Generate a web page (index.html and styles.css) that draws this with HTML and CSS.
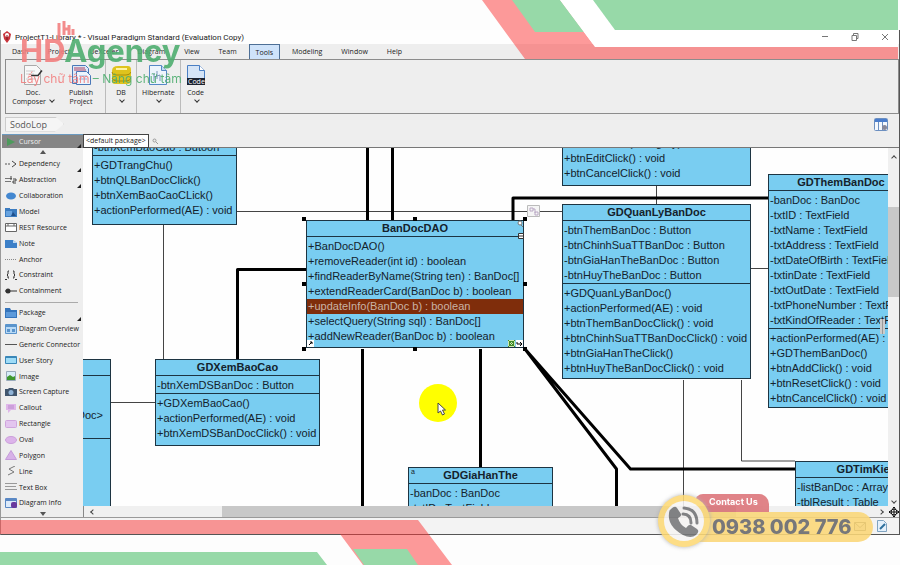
FILE: index.html
```html
<!DOCTYPE html>
<html lang="en">
  <head>
    <meta charset="utf-8" />
    <meta name="viewport" content="width=device-width, initial-scale=1.0" />
    <title>Visual Paradigm Standard</title>
    <link rel="stylesheet" href="styles.css">
  </head>
  <body>
    <div class="window">
      <header class="titlebar">
        <svg class="app-icon" viewBox="0 0 10 12"><path d="M5 0 9 3 8 8 5 12 2 8 1 3z" fill="#c8343c"/><circle cx="5" cy="4" r="2" fill="#fff"/><path d="M5 4v5" stroke="#7d1118"/></svg>
        <h1 class="title">ProjectT1-Library * - Visual Paradigm Standard (Evaluation Copy)</h1>
        <div class="window-buttons">
          <button aria-label="Minimize"><svg viewBox="0 0 8 8"><path d="M1 3.500h6"/></svg></button>
          <button aria-label="Restore"><svg viewBox="0 0 8 8"><path d="M1 2.500h4.500v5H1zM2.500 2V.5H7v5H6"/></svg></button>
          <button aria-label="Close"><svg viewBox="0 0 8 8"><path d="M1 1l6 6M7 1 1 7"/></svg></button>
        </div>
      </header>

      <nav class="menu">
        <button>Dash</button>
        <button>Project</button>
        <button>UeXceler</button>
        <button>Diagram</button>
        <button>View</button>
        <button>Team</button>
        <button class="active">Tools</button>
        <button>Modeling</button>
        <button>Window</button>
        <button>Help</button>
      </nav>

      <div class="toolbar">
        <div class="tool-group">
          <button class="tool wide">
            <svg viewBox="0 0 20 20"><path d="M1.500.5h12l4 4v15h-16z" fill="#f8f8f8" stroke="#aaa"/><path d="M3 6h9M3 9h8M3 14h10" stroke="#ccc"/><path d="M8 10.500h7l4-5" fill="none" stroke="#333" stroke-width="1.500"/></svg>
            <span>Doc.</span><span>Composer <i class="chevron"></i></span>
          </button>
          <button class="tool wide">
            <svg viewBox="0 0 20 20"><path d="M1.500.5h13l3 3v15h-16z" fill="#dce9f8" stroke="#4a78b8"/><path d="M3 3h11M3 5h12" stroke="#b04060"/><path d="M5.500 6.500h10l4 4v9h-14z" fill="#eef5fd" stroke="#4a78b8"/><path d="M8 11h8M8 14h8" stroke="#8fb2dc"/></svg>
            <span>Publish</span><span>Project</span>
          </button>
        </div>
        <div class="tool-group">
          <button class="tool">
            <svg viewBox="0 0 20 20"><path d="M1 6q0-5 6-5h10q3 0 3 4v11q0 3-4 3H4q-3 0-3-3z" fill="#dfc31d"/><path d="M1 7q0 3 4 3h10q4 0 5-3M1 13q1 3 5 3h9q4 0 5-3" fill="none" stroke="#a88d0a"/><path d="M5 4h11" stroke="#fff3a0" stroke-width="2"/></svg>
            <span>DB</span><i class="chevron"></i>
          </button>
        </div>
        <div class="tool-group">
          <button class="tool">
            <svg viewBox="0 0 20 20"><path d="M1.500.5h12l5 5v14h-17z" fill="#edf4fc" stroke="#5588c6"/><path d="M13.500.5v5h5" fill="#c5daf3" stroke="#5588c6"/><path d="M6 8v8M9 6v8M6 12l6-2v6" fill="none" stroke="#7895bb"/></svg>
            <span>Hibernate</span><i class="chevron"></i>
          </button>
        </div>
        <div class="tool-group">
          <button class="tool">
            <svg viewBox="0 0 20 20"><path d="M1.500.5h12l5 5v14h-17z" fill="#d5e4f6" stroke="#4a7fc4"/><path d="M13.500.5v5h5" fill="#fff" stroke="#4a7fc4"/><path d="M1 13h18v7H1z" fill="#1b2230"/><text x="2" y="19" class="code-label">Code</text></svg>
            <span>Code</span><i class="chevron"></i>
          </button>
        </div>
      </div>

      <div class="breadcrumb">
        <a class="crumb" href="#">SodoLop</a>
        <button class="layout-button" aria-label="Layout"><svg viewBox="0 0 14 13"><rect x=".5" y=".5" width="13" height="12" rx="1" fill="#f4f8fd" stroke="#6c8fc0"/><path d="M1 1h12v3H1z" fill="#4a7dcc"/><path d="M4.500 4v8M8.500 4v8" stroke="#6c8fc0"/><circle cx="10.500" cy="9.500" r="2.500" fill="#889"/></svg></button>
      </div>

      <main class="workspace">
        <aside class="palette">
          <button class="palette-item cursor more"><svg viewBox="0 0 12 10"><path d="M2 1l8 4-8 4z" fill="#4d9a5c"/></svg>Cursor</button>
          <div class="scroll-arrow up"></div>
          <button class="palette-item more"><svg viewBox="0 0 12 10"><path d="M0 5h6" stroke="#555" stroke-dasharray="2 1"/><path d="M7 2l4 3-4 3" fill="none" stroke="#444"/></svg>Dependency</button>
          <button class="palette-item more"><svg viewBox="0 0 12 10"><path d="M0 3.500h7M0 6.500h6" stroke="#777"/><path d="M6 1v4M8 4h3v2H8v2h3" fill="none" stroke="#444"/></svg>Abstraction</button>
          <button class="palette-item"><svg viewBox="0 0 12 10"><ellipse cx="6" cy="5" rx="5" ry="3.500" fill="#4387d0"/></svg>Collaboration</button>
          <button class="palette-item"><svg viewBox="0 0 12 10"><path d="M0 1h5v1h7v8H0z" fill="#3c7cc0"/><path d="M1 4h6v5H1z" fill="#68a3df"/><path d="M8 5l3 4H6z" fill="#204f8a"/></svg>Model</button>
          <button class="palette-item"><svg viewBox="0 0 12 10"><path d="M.5 1.500h11v8H.5zM.5 4h11M3 1v3M9 1v3" fill="#fff" stroke="#666"/></svg>REST Resource</button>
          <button class="palette-item"><svg viewBox="0 0 12 10"><path d="M0 2h8l4 3v5H0z" fill="#3d80c8"/><path d="M8 2v3h4z" fill="#bcd8f2"/></svg>Note</button>
          <button class="palette-item"><svg viewBox="0 0 12 10"><path d="M0 5.500h12" stroke="#888" stroke-dasharray="1 1"/></svg>Anchor</button>
          <button class="palette-item"><svg viewBox="0 0 12 10"><path d="M4 1H3v3L2 5l1 1v2h1M8 1h1v3l1 1-1 1v2H8M0 9.500h2M10 9.500h2" fill="none" stroke="#333"/></svg>Constraint</button>
          <button class="palette-item"><svg viewBox="0 0 12 10"><circle cx="3" cy="5" r="2.500" fill="#333"/><path d="M0 5h12" stroke="#333"/></svg>Containment</button>
          <hr />
          <button class="palette-item more"><svg viewBox="0 0 12 10"><path d="M0 0h5l1 2h6v8H0z" fill="#3574bb"/><path d="M1 4h10v5H1z" fill="#5d9ada"/></svg>Package</button>
          <button class="palette-item"><svg viewBox="0 0 12 10"><path d="M.5.5h11v9H.5z" fill="#b8d9f5" stroke="#5a94cc"/><path d="M1 1h10v2H1zM2 5h3v3H2zM7 5h3v3H7z" fill="#5a94cc"/></svg>Diagram Overview</button>
          <button class="palette-item"><svg viewBox="0 0 12 10"><path d="M0 5.500h12" stroke="#555"/></svg>Generic Connector</button>
          <button class="palette-item"><svg viewBox="0 0 12 10"><path d="M.5 1.500h11v7H.5z" fill="#9fdcf7" stroke="#3a87b8"/><path d="M1 2h10v1H1z" fill="#3a87b8"/></svg>User Story</button>
          <button class="palette-item"><svg viewBox="0 0 12 10"><path d="M1.500.5h9v9h-9z" fill="#d9edf9" stroke="#9ab"/><path d="M2 9V6l3-2 3 2 2-1v4z" fill="#3f982f"/></svg>Image</button>
          <button class="palette-item"><svg viewBox="0 0 12 10"><path d="M0 2h3l1-1h4l1 1h3v7H0z" fill="#41566e"/><circle cx="6" cy="5.500" r="2.500" fill="#90b4d8"/></svg>Screen Capture</button>
          <button class="palette-item"><svg viewBox="0 0 12 10"><path d="M1 1h10v6H6L3 10V7H1z" fill="#dfb6ea"/><path d="M3 3h6M3 5h6" stroke="#b989cb"/></svg>Callout</button>
          <button class="palette-item"><svg viewBox="0 0 12 10"><rect x=".5" y="1.500" width="11" height="7" rx="1" fill="#e3c5ef" stroke="#cfa5dd"/></svg>Rectangle</button>
          <button class="palette-item"><svg viewBox="0 0 12 10"><ellipse cx="6" cy="5" rx="5.500" ry="3.500" fill="#dcb4ea" stroke="#cb9fdb"/></svg>Oval</button>
          <button class="palette-item"><svg viewBox="0 0 12 10"><path d="M6 .5 11.500 9.500H.5z" fill="#d7b1e8" stroke="#c49ad9"/></svg>Polygon</button>
          <button class="palette-item"><svg viewBox="0 0 12 10"><path d="M10 0 4 3l5 3-6 3" fill="none" stroke="#777"/></svg>Line</button>
          <button class="palette-item"><svg viewBox="0 0 12 10"><path d="M0 1.500h12M0 4.500h11M0 7.500h12" stroke="#999"/></svg>Text Box</button>
          <button class="palette-item"><svg viewBox="0 0 12 10"><path d="M.5.5h11v9H.5z" fill="#dceafa" stroke="#5a88c4"/><path d="M1 1h10v2H1z" fill="#5a88c4"/><rect x="6" y="4" width="6" height="6" rx="2" fill="#693a9e"/></svg>Diagram Info</button>
          <div class="scroll-arrow down"></div>
        </aside>

        <section class="diagram">
          <div class="package-bar">
            <span class="package">&lt;default package&gt;</span>
            <svg viewBox="0 0 6 6"><circle cx="2.500" cy="2.500" r="1.500"/><path d="M4 4l2 2"/></svg>
          </div>

          <div class="canvas-row">
            <div class="canvas">
              <svg class="edges">
                <g transform="translate(-83 -148)">
                  <g class="thin">
                    <path d="M236 211.500H562M163.500 224v135M110 402.500h45M656.500 185v20M750 268.500h18M683.500 380v126M741.500 380v81H795"/>
                  </g>
                  <g class="thick">
                    <path d="M367.500 148v72M392.500 148v72M513 220v-22h255M306 269.500h-68.500V359M362.500 349v157M480.500 349v118"/>
                    <path d="M525 349 630.500 469H795M525 349l91.500 120v37"/>
                  </g>
                </g>
              </svg>

              <div class="node trang-chu">
                <ul><li>-btnXemBaoCao : Butoon</li></ul>
                <ul><li>+GDTrangChu()</li><li>+btnQLBanDocClick()</li><li>+btnXemBaoCaoCLick()</li><li>+actionPerformed(AE) : void</li></ul>
              </div>

              <div class="node side-list">
                <h3></h3>
                <ul><li></li><li></li><li>Doc&gt;</li><li></li></ul>
                <ul></ul>
              </div>

              <div class="node xem-bao-cao">
                <h3>GDXemBaoCao</h3>
                <ul><li>-btnXemDSBanDoc : Button</li></ul>
                <ul><li>+GDXemBaoCao()</li><li>+actionPerformed(AE) : void</li><li>+btnXemDSBanDocClick() : void</li></ul>
              </div>

              <div class="node ban-doc-dao">
                <h3>BanDocDAO</h3>
                <ul>
                  <li>+BanDocDAO()</li>
                  <li>+removeReader(int id) : boolean</li>
                  <li>+findReaderByName(String ten) : BanDoc[]</li>
                  <li>+extendReaderCard(BanDoc b) : boolean</li>
                  <li class="selected">+updateInfo(BanDoc b) : boolean</li>
                  <li>+selectQuery(String sql) : BanDoc[]</li>
                  <li>+addNewReader(BanDoc b) : boolean</li>
                </ul>
              </div>

              <div class="node edit-form">
                <ul><li>+btnAddClick(Category) : void</li><li>+btnEditClick() : void</li><li>+btnCancelClick() : void</li></ul>
              </div>

              <div class="node quan-ly">
                <h3>GDQuanLyBanDoc</h3>
                <ul><li>-btnThemBanDoc : Button</li><li>-btnChinhSuaTTBanDoc : Button</li><li>-btnGiaHanTheBanDoc : Button</li><li>-btnHuyTheBanDoc : Button</li></ul>
                <ul>
                  <li>+GDQuanLyBanDoc()</li>
                  <li>+actionPerformed(AE) : void</li>
                  <li>+btnThemBanDocClick() : void</li>
                  <li>+btnChinhSuaTTBanDocClick() : void</li>
                  <li>+btnGiaHanTheClick()</li>
                  <li>+btnHuyTheBanDocClick() : void</li>
                </ul>
              </div>

              <div class="node them-ban-doc">
                <h3>GDThemBanDoc</h3>
                <ul>
                  <li>-banDoc : BanDoc</li>
                  <li>-txtID : TextField</li>
                  <li>-txtName : TextField</li>
                  <li>-txtAddress : TextField</li>
                  <li>-txtDateOfBirth : TextField</li>
                  <li>-txtinDate : TextField</li>
                  <li>-txtOutDate : TextField</li>
                  <li>-txtPhoneNumber : TextField</li>
                  <li>-txtKindOfReader : TextField</li>
                </ul>
                <ul><li>+actionPerformed(AE) : void</li><li>+GDThemBanDoc()</li><li>+btnAddClick() : void</li><li>+btnResetClick() : void</li><li>+btnCancelClick() : void</li></ul>
              </div>

              <div class="node gia-han">
                <span class="tag">a</span>
                <h3>GDGiaHanThe</h3>
                <ul><li>-banDoc : BanDoc</li><li>-txtID : TextField</li></ul>
              </div>

              <div class="node tim-kiem">
                <h3>GDTimKiem</h3>
                <ul><li>-listBanDoc : ArrayList</li><li>-tblResult : Table</li></ul>
              </div>

              <!-- selection handles and pointer -->
              <svg class="edges">
                <g transform="translate(-83 -148)">
                  <path d="M302 217h4v4h-4zM413 217h4v4h-4zM523 217h4v4h-4zM302 282h4v4h-4zM523 282h4v4h-4zM302 347h4v4h-4zM413 347h4v4h-4zM523 347h4v4h-4z"/>
                  <path d="M307 340h7v7h-7zM516 340h7v7h-7z" fill="#fff"/>
                  <path d="M309 345l3-3M310 342h2v2M517 342v2h5M520 342l2 2-2 2" fill="none" stroke="#000"/>
                  <path d="M508 340h7v7h-7z" fill="#cfe8b0"/>
                  <path d="M508 340l7 7M515 340l-7 7M509.500 341.500h4v4h-4z" fill="none" stroke="#3f8a2a"/>
                  <path d="M518.500 233.500h5v5h-5zM519 236h4" fill="#fff" stroke="#333"/>
                  <circle cx="520" cy="223" r="2" fill="#fff" stroke="#777"/>
                  <path d="M521 225l2 2" stroke="#777"/>
                  <path d="M527.500 205.500h12v11h-12z" fill="#f5f5f5" stroke="#bbb"/>
                  <path d="M530 208h3v3h-3zM535 212h3v3h-3zM533 209h2v4" fill="none" stroke="#b9a8c4"/>
                  <path d="M880 319h5v15h-5z" fill="#ccc"/>
                  <path d="M882.500 319v15" stroke="#999"/>
                  <circle cx="438" cy="403" r="19" fill="#ff0"/>
                  <path d="M438 403v10l2.500-2 2 4 2-1-2-4h3z" fill="#fff" stroke="#444"/>
                </g>
              </svg>
            </div>
            <div class="v-scroll">
              <i class="arrow-up"></i>
              <div class="thumb"></div>
              <i class="arrow-down"></i>
            </div>
          </div>

          <div class="h-scroll">
            <i class="arrow-left"></i>
            <div class="track"><div class="thumb"></div></div>
            <i class="arrow-right"></i>
            <svg class="pan" viewBox="0 0 10 10"><circle cx="5" cy="5" r="3" fill="none"/><path d="M5 0v10M0 5h10M3.500 1.500 5 0l1.500 1.500M3.500 8.500 5 10l1.500-1.500M1.500 3.500 0 5l1.500 1.500M8.500 3.500 10 5 8.500 6.500" fill="none"/></svg>
          </div>
        </section>
      </main>

      <footer class="statusbar">
        <svg viewBox="0 0 12 12"><path d="M.5 2.500h11v8H.5zl5.500 5 5.500-5" fill="#ddd" stroke="#555"/></svg>
        <svg viewBox="0 0 12 12"><path d="M1.500.5h6l3 3v8h-9z" fill="#e4f0fb" stroke="#7fa3c0"/><path d="M4 9l5-5" stroke="#2e6f9c" stroke-width="2"/></svg>
      </footer>
    </div>

    <svg class="banner top" viewBox="0 0 418 60">
      <path d="M0 0 43 59H416V44H111L78 0z" class="red"/>
      <path d="M30 0 53 32h49L78 0z" class="green"/>
      <path d="M78 0 113 47H416V30H133L111 0z" class="gap"/>
      <path d="M111 0 133 30H416V0z" class="green"/>
    </svg>
    <svg class="banner bottom" viewBox="0 0 460 45">
      <path d="M0 0H418L452 45H363L340 14H0z" class="red"/>
      <path d="M353 29h54l11 16h-54zM0 32h317l10 13H0z" class="green"/>
    </svg>

    <div class="logo">
      <svg viewBox="0 0 18 22"><path d="M2 2v18M7 0v14M12 4v10M7 8h5M16 8v6" fill="none"/></svg>
      <div class="logo-name"><span>HD</span>Agency</div>
      <div class="logo-slogan"><span>Lấy chữ tâm</span> – Nâng chữ tâm</div>
    </div>

    <a class="contact" href="tel:0938002776">
      <svg class="phone" viewBox="0 0 54 54">
        <circle cx="27" cy="27" r="26" fill="#fdd976"/>
        <circle cx="27" cy="27" r="20" fill="#f7f5f4"/>
        <path d="M14 15q4-4 6-1l4 6q1 2-3 4 2 7 8 10 3-4 5-3l6 4q3 2-1 6-5 4-13 0Q10 32 12 19q0-3 2-4z" fill="#77787a"/>
        <path d="M26 20q8 0 8 9M27 14q13 1 13 15" fill="none" stroke="#77787a" stroke-width="3" stroke-linecap="round"/>
      </svg>
      <span class="contact-label">Contact Us</span>
      <span class="contact-number">0938 002 776</span>
    </a>
  </body>
</html>
```
FILE: styles.css
```css
:root {
  --ui-bg: #eeeeee;
  --line: #8c8c8c;
  --node: #79cdf1;
  --red: #fb3535;
  --green: #97d9a8;
}

* {
  box-sizing: border-box;
}

body {
  display: flex;
  flex-direction: column;
  min-height: 100vh;
  margin: 0;
  padding: 30px 0;
  position: relative;
  background: #fdfdfd;
  color: #222;
  font-family: "Open Sans", sans-serif;
  font-size: 7px;
  line-height: 9px;
}

button {
  padding: 0;
  border: none;
  background: none;
  color: inherit;
  font: inherit;
}

ul, h1, h3 {
  margin: 0;
  padding: 0;
  list-style: none;
}

.window {
  flex: 1;
  display: flex;
  flex-direction: column;
  border: solid #555;
  border-width: 0 1px 1px;
  border-left-color: #999;
  background: var(--ui-bg);
}

.titlebar {
  display: flex;
  align-items: center;
  height: 14px;
  padding: 0 10px 0 1px;
  background: #fefefe;
}

.app-icon {
  width: 10px;
  height: 12px;
  margin-right: 3px;
}

.title {
  font-family: Roboto, sans-serif;
  font-size: 8px;
  font-weight: 400;
}

/* keep the window buttons above the banner */
.window-buttons {
  display: flex;
  gap: 22px;
  margin-left: auto;
  position: relative;
  z-index: 1;
}

.window-buttons svg {
  display: block;
  width: 8px;
  height: 8px;
  fill: none;
  stroke: #777;
}

.menu {
  display: flex;
  gap: 5px;
  height: 15px;
  padding: 0 4px;
}

.menu button {
  padding: 0 7px;
}

.menu .active {
  border: 1px solid #4d6f96;
  border-bottom: none;
  background: #cfe3fa;
  padding: 0 6px;
}

/* toolbar */

.toolbar {
  display: flex;
  height: 55px;
  margin-left: 4px;
  border: 1px solid var(--line);
}

.tool-group {
  display: flex;
  padding: 0 5px;
  border-right: 1px solid #bbb;
}

.tool-group:first-child {
  padding: 0 0 0 3px;
}

.tool-group:last-child {
  border: none;
}

.tool {
  display: flex;
  flex-direction: column;
  align-items: center;
  min-width: 20px;
  padding-top: 5px;
}

.tool.wide {
  width: 48px;
  white-space: nowrap;
}

.tool svg {
  width: 20px;
  height: 20px;
  margin-bottom: 3px;
}

.code-label {
  fill: #fff;
  font-size: 7px;
}

.chevron {
  display: inline-block;
  width: 4px;
  height: 4px;
  margin: 1px 0 2px 2px;
  border: solid #333;
  border-width: 0 1px 1px 0;
  transform: rotate(45deg);
}

.breadcrumb {
  display: flex;
  align-items: center;
  justify-content: space-between;
  height: 20px;
  padding: 0 11px 0 4px;
}

.crumb {
  padding: 0 16px 0 4px;
  border: 1px solid #ccc;
  background: #f5f5f5;
  clip-path: polygon(0 0, 85% 0, 100% 50%, 85% 100%, 0 100%);
  color: #555;
  font-size: 9px;
  line-height: 13px;
  text-decoration: none;
}

.layout-button svg {
  display: block;
  width: 14px;
  height: 13px;
}

.workspace {
  flex: 1;
  display: flex;
}

/* palette */

.palette {
  display: flex;
  flex-direction: column;
  width: 82px;
  padding-left: 1px;
}

.palette-item {
  flex: 1 1 0;
  display: flex;
  align-items: center;
  gap: 2px;
  padding-left: 3px;
  position: relative;
  white-space: nowrap;
}

.palette-item svg {
  width: 12px;
  height: 10px;
}

.palette-item.cursor {
  flex: 0 0 14px;
  border-top: 1px solid #6b9ac0;
  background: #858585;
  color: #eee;
}

.more::after {
  content: "";
  position: absolute;
  right: 2px;
  bottom: 0;
  border-left: 4px solid transparent;
  border-bottom: 4px solid #222;
}

.palette hr {
  width: 73px;
  height: 1px;
  margin: 3px 3px 2px;
  border: none;
  background: #aaa;
}

.scroll-arrow {
  height: 8px;
  display: flex;
  justify-content: center;
  align-items: center;
}

.scroll-arrow::before {
  content: "";
  border: 3px solid transparent;
}

.up::before {
  border-top: none;
  border-bottom: 4px solid #555;
}

.scroll-arrow.down {
  height: 6px;
}

.down::before {
  border-bottom: none;
  border-top: 4px solid #555;
}

/* diagram */

.diagram {
  flex: 1;
  display: flex;
  flex-direction: column;
  min-width: 0;
}

.package-bar {
  display: flex;
  align-items: center;
  gap: 3px;
  height: 14px;
  border-bottom: 1px solid #777;
}

.package {
  padding: 1px 2px 2px;
  border: 1px solid #444;
  background: #fff;
}

.package-bar svg {
  width: 6px;
  height: 6px;
  fill: none;
  stroke: #999;
}

.canvas-row {
  flex: 1;
  display: flex;
}

.canvas {
  flex: 1;
  position: relative;
  overflow: hidden;
  background: #fefefe;
  font-family: "Liberation Sans", sans-serif;
  font-size: 11px;
  line-height: 15px;
  color: #14222c;
}

.edges {
  position: absolute;
  top: 0;
  left: 0;
  width: 100%;
  height: 100%;
}

.thin {
  fill: none;
  stroke: #444;
}

.thick {
  fill: none;
  stroke: #000;
  stroke-width: 3;
  stroke-linejoin: round;
}

.node {
  position: absolute;
  border: 1px solid #1d3442;
  background: var(--node);
  white-space: nowrap;
}

.node h3 {
  height: 15px;
  font-size: 11px;
  line-height: 15px;
  text-align: center;
}

.node ul {
  padding-top: 2px;
  border-top: 1px solid #1d3442;
}

.node li {
  min-height: 15px;
  padding-left: 1px;
}

.node .selected {
  background: #7f2d0b;
  color: #c9b3a5;
}

.tag {
  position: absolute;
  top: 0;
  left: 2px;
  font-size: 7px;
  line-height: 8px;
}

.trang-chu {
  top: -9px;
  left: 9px;
  width: 145px;
  height: 86px;
}

.trang-chu ul:first-child {
  padding: 0;
  border: none;
}

.side-list {
  top: 211px;
  left: -60px;
  width: 88px;
  height: 160px;
}

.side-list li {
  padding-right: 7px;
  text-align: right;
}

.xem-bao-cao {
  top: 211px;
  left: 72px;
  width: 165px;
  height: 87px;
}

.ban-doc-dao {
  top: 72px;
  left: 223px;
  width: 218px;
  height: 128px;
}

.edit-form {
  top: -16px;
  left: 479px;
  width: 189px;
  height: 54px;
}

.quan-ly {
  top: 56px;
  left: 479px;
  width: 189px;
  height: 175px;
}

.them-ban-doc {
  top: 26px;
  left: 685px;
  width: 146px;
  height: 234px;
}

.gia-han {
  top: 319px;
  left: 325px;
  width: 145px;
  height: 80px;
}

.tim-kiem {
  top: 313px;
  left: 712px;
  width: 146px;
  height: 80px;
}

.v-scroll {
  display: flex;
  flex-direction: column;
  align-items: center;
  width: 11px;
  padding: 8px 0 3px;
  background: #f0f0f0;
}

.v-scroll .thumb {
  width: 100%;
  height: 26%;
  margin: 47px 0 auto;
  background: #c8c8c8;
}

.h-scroll {
  display: flex;
  align-items: center;
  gap: 6px;
  height: 11px;
  padding-left: 7px;
  border-left: 1px solid #888;
  background: #f0f0f0;
}

.track {
  flex: 1;
  height: 100%;
  padding: 0 17% 0 15%;
}

.h-scroll .thumb {
  height: 100%;
  background: #c8c8c8;
}

.arrow-up, .arrow-down, .arrow-left, .arrow-right {
  flex: none;
  width: 4px;
  height: 4px;
  border: solid #444;
  border-width: 1px 0 0 1px;
  transform: rotate(45deg);
}

.arrow-down {
  transform: rotate(225deg);
}

.arrow-left {
  transform: rotate(-45deg);
}

.arrow-right {
  transform: rotate(135deg);
}

.pan {
  width: 10px;
  height: 10px;
  stroke: #111;
}

.statusbar {
  display: flex;
  justify-content: flex-end;
  align-items: center;
  gap: 10px;
  height: 17px;
  padding-right: 11px;
  border-top: 1px solid #999;
  background: #f3f3f3;
}

.statusbar svg {
  width: 12px;
  height: 12px;
}

/* overlays */

.banner {
  position: absolute;
}

.banner.top {
  top: 0;
  right: 0;
  width: 418px;
  height: 60px;
}

.banner.bottom {
  bottom: 0;
  left: 0;
  width: 460px;
  height: 45px;
}

.red {
  fill: var(--red);
  fill-opacity: 0.5;
}

.green {
  fill: var(--green);
}

.gap {
  fill: #fff;
}

.logo {
  position: absolute;
  top: 32px;
  left: 20px;
  color: #4fae70;
  font-family: Inter, sans-serif;
  opacity: 0.9;
}

.logo svg {
  position: absolute;
  top: -11px;
  left: 37px;
  width: 18px;
  height: 22px;
  stroke: #f28080;
  stroke-width: 3;
}

.logo span {
  color: #f28080;
}

.logo-name {
  font-size: 31px;
  font-weight: 700;
  line-height: 38px;
}

.logo-slogan {
  font-size: 12px;
  line-height: 18px;
}

.contact {
  position: absolute;
  right: 27px;
  bottom: 17px;
  display: grid;
  width: 216px;
  height: 54px;
  padding-left: 38px;
  grid-template-rows: 18px 30px;
  align-content: start;
  font-family: Inter, sans-serif;
  text-decoration: none;
  opacity: 0.88;
}

.phone {
  position: absolute;
  top: 0;
  left: 0;
  width: 54px;
  height: 54px;
  filter: drop-shadow(0 0 2px #aaa);
}

.contact-label {
  width: 74px;
  padding-left: 14px;
  border-radius: 8px 10px 0 0;
  background: #dc7378;
  color: #fff;
  font-size: 9px;
  font-weight: 700;
  line-height: 16px;
}

.contact-number {
  padding-left: 17px;
  border-radius: 0 15px 15px 0;
  background: #fbd778;
  color: #66676a;
  font-size: 20px;
  font-weight: 800;
  line-height: 30px;
  white-space: nowrap;
}
```
